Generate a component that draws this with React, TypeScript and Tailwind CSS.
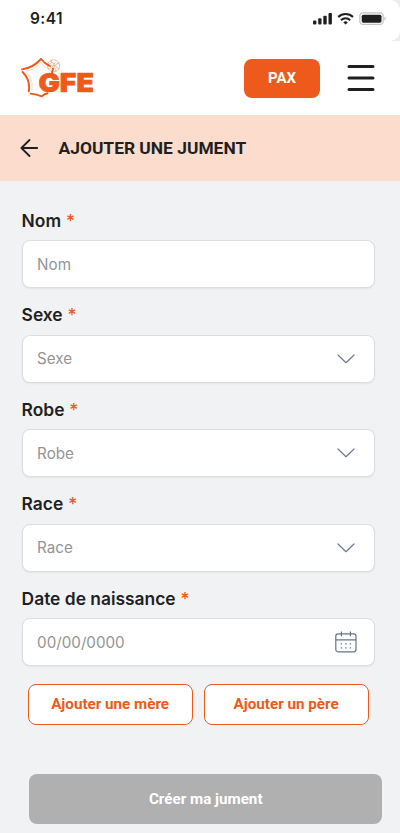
import { useState } from "react";

interface Field {
  id: string;
  label: string;
  placeholder: string;
  kind: "text" | "select" | "date";
}

const FIELDS: Field[] = [
  { id: "nom", label: "Nom", placeholder: "Nom", kind: "text" },
  { id: "sexe", label: "Sexe", placeholder: "Sexe", kind: "select" },
  { id: "robe", label: "Robe", placeholder: "Robe", kind: "select" },
  { id: "race", label: "Race", placeholder: "Race", kind: "select" },
  {
    id: "naissance",
    label: "Date de naissance",
    placeholder: "00/00/0000",
    kind: "date",
  },
];

function StatusBar() {
  return (
    <div className="h-[41px] bg-[#ededed]">
      <div className="flex h-full items-start justify-between rounded-r-[10px] bg-white pl-[30px] pr-[14px]">
        <span className="mt-[9px] font-['Inter',sans-serif] text-[15.5px] leading-[19px] font-semibold tracking-[0.4px] text-[#1f1f1f]">
          9:41
        </span>
        <svg className="mt-[11px]" width="74" height="16" viewBox="312 11 74 16">
          <g fill="#1f1f1f">
            <rect x="313" y="20.5" width="3.4" height="4" rx="1" />
            <rect x="318.2" y="18.3" width="3.3" height="6.2" rx="1" />
            <rect x="323.3" y="15.7" width="3.4" height="8.8" rx="1" />
            <rect x="328.5" y="13" width="3.4" height="11.5" rx="1" />
            <path d="M345.6 24.6 343.4 22.4a3.2 3.2 0 0 1 4.4 0Z" />
          </g>
          <g fill="none" stroke="#1f1f1f" strokeWidth="2">
            <path d="M338.2 17a10.7 10.7 0 0 1 14.8 0" />
            <path d="M341 20.2a6.7 6.7 0 0 1 9.2 0" />
          </g>
          <rect
            x="359.8"
            y="12.9"
            width="23.4"
            height="11.4"
            rx="3.4"
            fill="#fff"
            stroke="#c4c4c4"
            strokeWidth="1.2"
          />
          <rect x="361.7" y="14.7" width="19.8" height="8" rx="1.6" fill="#1f1f1f" />
          <path d="M384.4 16.6c1.8.7 1.8 3.3 0 4Z" fill="#c4c4c4" />
        </svg>
      </div>
    </div>
  );
}

function Logo() {
  return (
    <svg width="74" height="42" viewBox="21 58 74 42" role="img" aria-label="GFE">
      <g fill="none" stroke="#ee5a1b" strokeLinecap="round">
        <path
          strokeWidth="1.9"
          d="M22 70.4Q33 69 41 60M41 60Q44.5 64.5 50 67.2M22.6 73Q30.5 81 28.8 92.3M30.6 94.6Q37 95.4 41.8 97.4Q44.5 94.8 47.5 94.3M53 69.5 52 74"
        />
        <path
          strokeWidth="0.5"
          strokeOpacity="0.5"
          strokeDasharray="1.5 0.8"
          d="M26 72.5Q35 70 41 63.5Q45 69 49 70M26 73Q34 81 31.5 91.5"
        />
        <g strokeWidth="0.6" strokeOpacity="0.7">
          <circle cx="53.6" cy="66.8" r="6" strokeDasharray="3 0.7" />
          <path d="M48.6 65.5 52 63.3 55.5 65.8 59 63.8M52 63.3 51 61.4M52.2 66.6 54.8 64M50 69.5 54 66.2 58.8 69.6M54 66.2 55.8 71.8" />
        </g>
      </g>
      <text
        x="38.4"
        y="93"
        fill="#ee5a1b"
        stroke="#ee5a1b"
        strokeWidth="0.7"
        className="font-['Inter',sans-serif] text-[26px] font-black"
        textLength="55.4"
        lengthAdjust="spacingAndGlyphs"
      >
        GFE
      </text>
    </svg>
  );
}

function Header() {
  return (
    <header className="flex h-[74px] items-center bg-white pl-[21px] pr-[25px]">
      <Logo />
      <button className="ml-auto h-[39px] w-[76px] rounded-[8px] bg-[#ee5a1b] font-['Roboto',sans-serif] text-[15px] font-bold text-white">
        PAX
      </button>
      <button aria-label="Menu" className="ml-[27px]">
        <svg
          width="28"
          height="28"
          viewBox="0 0 28 28"
          stroke="#1f1f1f"
          strokeWidth="3"
          strokeLinecap="round"
        >
          <path d="M2 2.5h24M2 14h24M2 25.4h24" />
        </svg>
      </button>
    </header>
  );
}

function ChevronIcon() {
  return (
    <svg width="18" height="10" viewBox="0 0 18 10" fill="none" stroke="#6b7a90" strokeWidth="1.2">
      <path d="m1 1 8 7.7L17 1" strokeLinecap="round" strokeLinejoin="round" />
    </svg>
  );
}

function CalendarIcon() {
  return (
    <svg width="22" height="22" viewBox="0 0 22 22" fill="none" stroke="#64738b" strokeWidth="1.2">
      <rect x="0.8" y="2.8" width="20.2" height="18" rx="2.2" />
      <path d="M0.8 8.8h20.2M6.4.6v4.6M15.4.6v4.6" />
      <path strokeDasharray="1.4 3.1" d="M5.7 12.9h11M5.7 16.9h11" />
    </svg>
  );
}

function FormField({
  field,
  value,
  onChange,
}: {
  field: Field;
  value: string;
  onChange: (value: string) => void;
}) {
  return (
    <div>
      <label
        htmlFor={field.id}
        className="block h-[22px] text-[17.4px] leading-[22.5px] font-semibold text-[#1f1f1f]"
      >
        {field.label} <span className="ml-[0.5px] font-medium text-[#ee5a1b]">*</span>
      </label>
      <div className="mt-[8.5px] flex h-12 items-center rounded-[8px] border border-[#dcdddf] bg-white pl-[14.5px] pr-[17px] shadow-[0_1px_2px_rgba(0,0,0,0.06)]">
        <input
          id={field.id}
          value={value}
          onChange={(e) => onChange(e.target.value)}
          placeholder={field.placeholder}
          className="min-w-0 flex-1 bg-transparent pt-[1.5px] text-[15.2px] text-[#1f1f1f] outline-none placeholder:text-[#949494]"
        />
        {field.kind === "select" ? (
          <span className="mr-[2px]">
            <ChevronIcon />
          </span>
        ) : null}
        {field.kind === "date" ? <CalendarIcon /> : null}
      </div>
    </div>
  );
}

export default function App() {
  const [values, setValues] = useState<Record<string, string>>({});

  return (
    <div className="flex h-[833px] w-[400px] flex-col overflow-hidden bg-[#f1f2f4] font-['Inter',sans-serif]">
      <StatusBar />
      <Header />

      <div className="flex h-[66px] items-center bg-[#fcdccd] pl-[20px]">
        <button aria-label="Retour">
          <svg
            width="19"
            height="18"
            viewBox="0 0 19 18"
            fill="none"
            stroke="#1f1f1f"
            strokeWidth="1.8"
            strokeLinecap="round"
            strokeLinejoin="round"
          >
            <path d="M17.2 9H1.4M9.5 1 1.4 9l8.1 8" />
          </svg>
        </button>
        <h1 className="ml-[19.5px] pt-px font-['Roboto',sans-serif] text-[17.4px] font-bold text-[#1f1f1f]">
          AJOUTER UNE JUMENT
        </h1>
      </div>

      <form className="flex flex-col pt-[28.9px]">
        <div className="flex flex-col gap-[16px] pl-[21.6px] pr-[25.4px]">
          {FIELDS.map((field) => (
            <FormField
              key={field.id}
              field={field}
              value={values[field.id] ?? ""}
              onChange={(value) => setValues({ ...values, [field.id]: value })}
            />
          ))}
        </div>

        <div className="mt-[17.6px] flex gap-[11px] pl-[27.6px] pr-[31.4px] font-['Roboto',sans-serif] text-[15.2px] font-bold text-[#ee5a1b]">
          <button type="button" className="h-[41px] flex-1 rounded-[8px] border border-[#ee5a1b] bg-white">
            Ajouter une mère
          </button>
          <button type="button" className="h-[41px] flex-1 rounded-[8px] border border-[#ee5a1b] bg-white">
            Ajouter un père
          </button>
        </div>

        <button
          type="submit"
          disabled
          className="mt-[49px] mr-[17.6px] ml-[29px] h-[50px] rounded-[8px] bg-[#b0b0b0] font-['Roboto',sans-serif] text-[15.2px] font-bold text-white"
        >
          Créer ma jument
        </button>
      </form>
    </div>
  );
}
